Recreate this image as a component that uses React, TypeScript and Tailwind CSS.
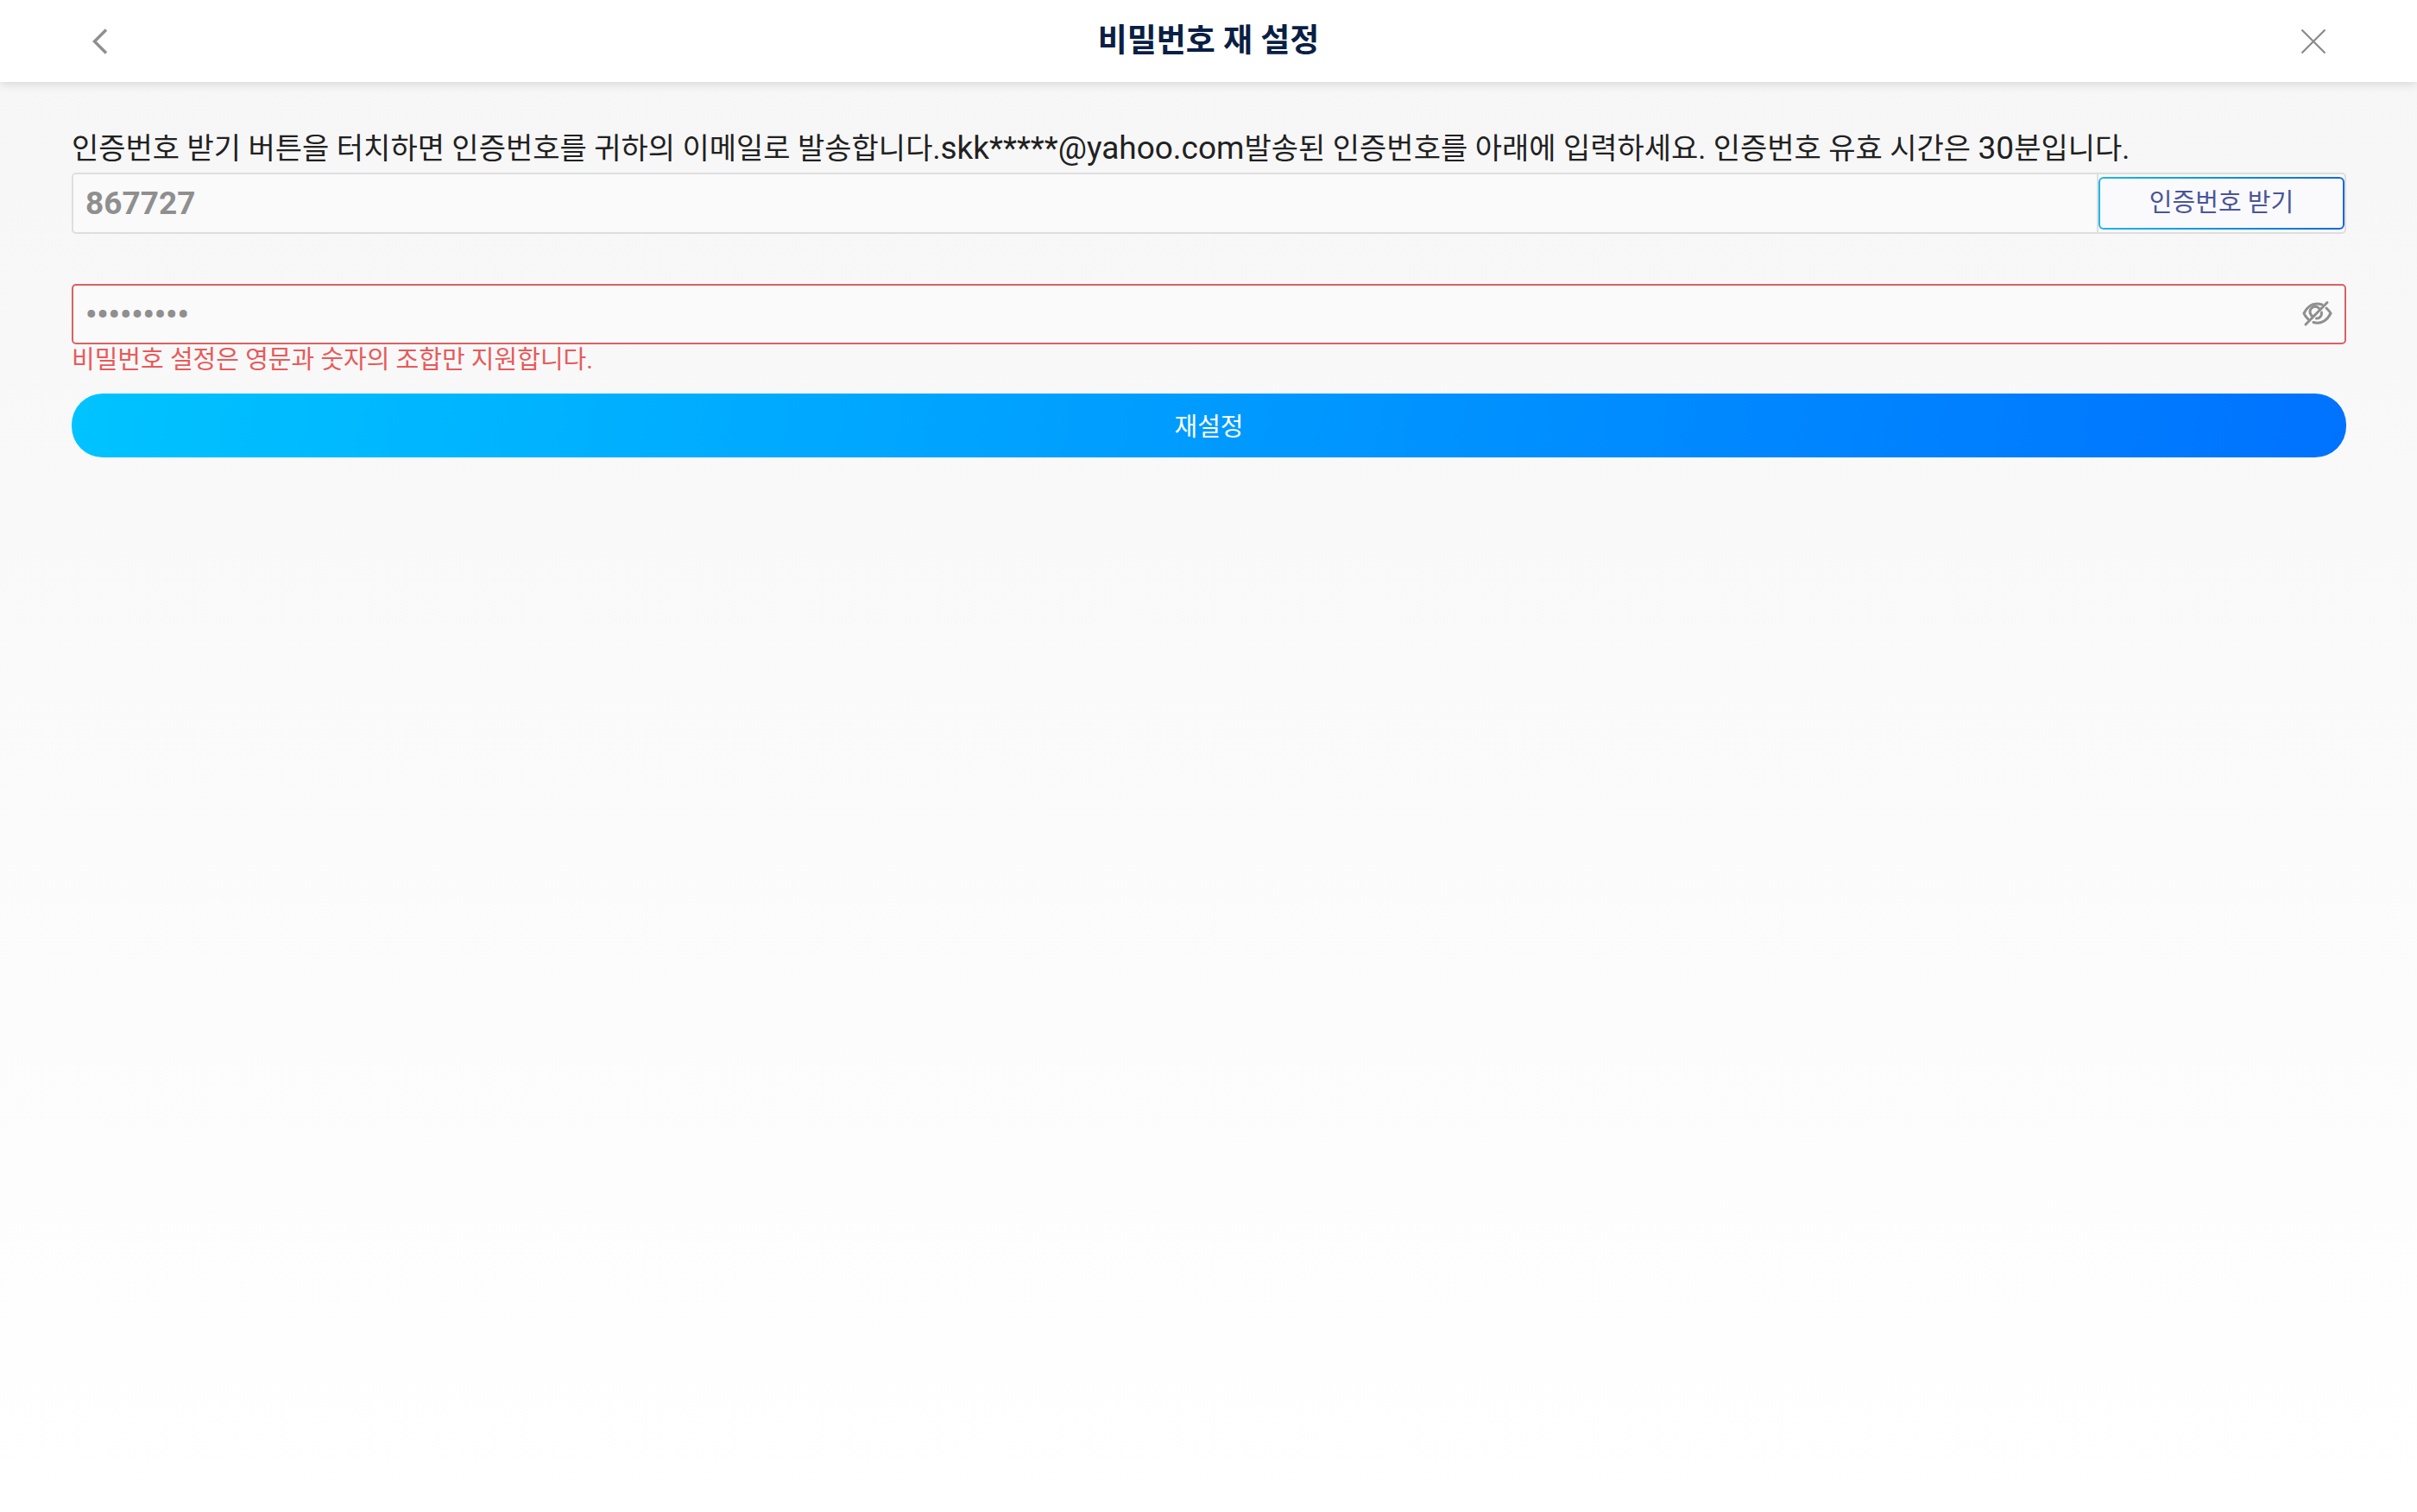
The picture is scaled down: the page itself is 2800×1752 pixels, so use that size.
import { useState } from "react";

export default function App() {
  const [code, setCode] = useState("867727");
  const [password, setPassword] = useState("abcdefghi");
  const [visible, setVisible] = useState(false);

  return (
    <div className="flex min-h-screen flex-col bg-linear-to-b from-[#f6f6f6] to-white font-[Roboto,'Noto_Sans_CJK_KR',sans-serif] text-[#212121]">
      {/* Header */}
      <header className="flex h-[95px] items-center justify-between bg-white px-[100px] shadow-[0_3px_10px_rgba(0,0,0,.12)]">
        <button type="button" aria-label="뒤로" className="flex h-10 w-10 items-center justify-center">
          <svg width="40" height="40" viewBox="0 0 40 40" fill="none" stroke="#8f8f8f" strokeWidth="3.5">
            <path d="M23 6.500 9.500 20 23 33.500" />
          </svg>
        </button>

        <h1 className="text-[37px] leading-[47px] font-bold text-[#0a1f44]">
          비밀번호 재 설정
        </h1>

        <button type="button" aria-label="닫기" className="flex h-10 w-10 items-center justify-center">
          <svg width="40" height="40" viewBox="0 0 40 40" fill="none" stroke="#8a8a8a" strokeWidth="2.2">
            <path d="M6.500 6.500l27 27M33.500 6.500l-27 27" />
          </svg>
        </button>
      </header>

      <form className="flex flex-col pt-[49px] pr-[82px] pl-[83px]" onSubmit={(e) => e.preventDefault()}>
        {/* Verification code */}
        <label htmlFor="code" className="text-[34px] leading-[56px]">
          인증번호 받기 버튼을 터치하면 인증번호를 귀하의 이메일로 발송합니다.
          <span className="text-[37px] leading-none">skk*****@yahoo.com</span>
          발송된 인증번호를 아래에 입력하세요. 인증번호 유효 시간은{" "}
          <span className="text-[37px] leading-none">30</span>분입니다.
        </label>
        <div className="flex h-[71px] items-center rounded-[5px] border-2 border-[#dedede] bg-[#fafafa]">
          <input
            id="code"
            type="text"
            value={code}
            onChange={(e) => setCode(e.target.value)}
            className="h-full min-w-0 flex-1 border-r-2 border-[#dedede] px-[14px] text-[37px] font-bold text-[#8f8f8f] outline-none"
          />
          <div className="flex h-[61px] w-[285px] rounded-md bg-linear-to-r from-[#1fb6e8] to-[#1268e0] p-[2px]">
            <button type="button" className="flex-1 rounded-sm bg-[#fafafc] text-[29px] text-[#4a5699]">
              인증번호 받기
            </button>
          </div>
        </div>

        {/* New password */}
        <div className="mt-[58px] flex h-[70px] items-center rounded-[5px] border-2 border-[#dc6060] bg-[#fafafa] pr-[14px]">
          <input
            type={visible ? "text" : "password"}
            aria-label="비밀번호"
            value={password}
            onChange={(e) => setPassword(e.target.value)}
            className="h-full min-w-0 flex-1 px-[14px] text-[37px] font-bold text-[#8f8f8f] outline-none"
          />
          <button type="button" aria-label="비밀번호 표시" onClick={() => setVisible(!visible)}>
            <svg width="36" height="36" viewBox="0 0 36 36" fill="none" stroke="#8f8f8f" strokeWidth="3" strokeLinecap="round">
              <path d="M24 7C14 4 7 9 3 17c1 3 3 5 5 7M29 11c2 2 4 4 5 6-4 8-11 13-20 10.500" />
              <path d="M21 12a6 6 0 1 0-7 9M23.500 16a6 6 0 0 1-6 7M5 30 30 4.500" />
            </svg>
          </button>
        </div>
        <p className="text-[29px] leading-9 text-[#e85a5a]">
          비밀번호 설정은 영문과 숫자의 조합만 지원합니다.
        </p>

        <button
          type="submit"
          className="mt-[21px] h-[74px] rounded-[36px] bg-[linear-gradient(100deg,#00c3ff,#0072ff)] pt-1.5 text-[29px] text-white"
        >
          재설정
        </button>
      </form>
    </div>
  );
}
